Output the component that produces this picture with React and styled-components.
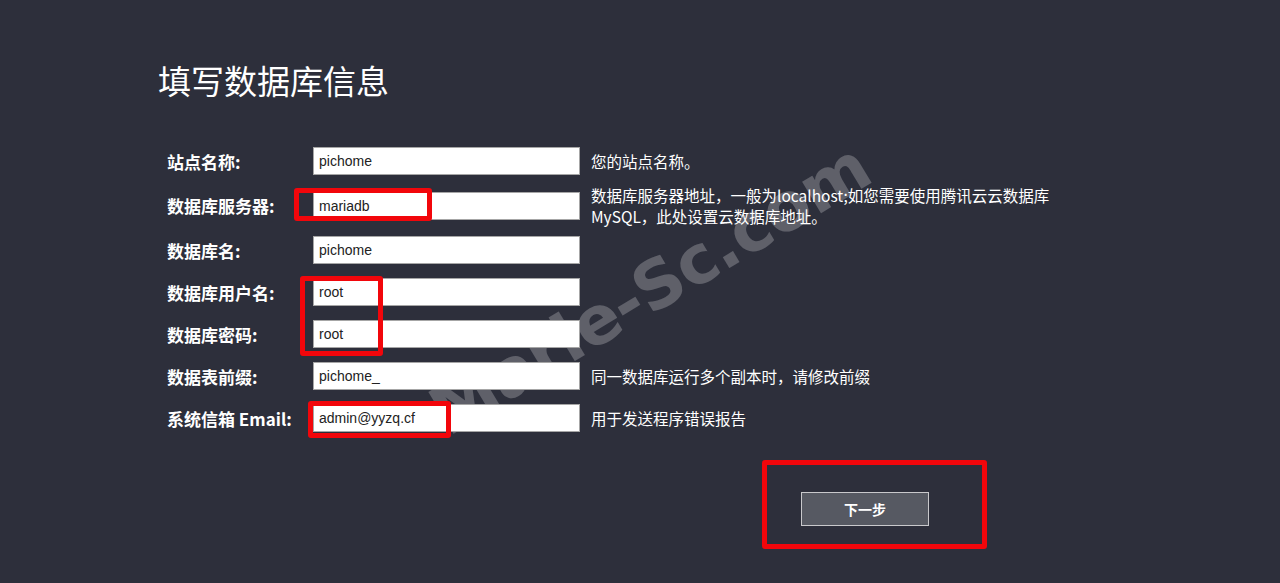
import React from "react";
import styled, { createGlobalStyle } from "styled-components";

const GlobalStyle = createGlobalStyle`
  html, body { margin: 0; padding: 0; }
  body {
    background: #2d2f3b;
    font-family: "Noto Sans CJK SC", "Noto Sans", sans-serif;
    color: #ffffff;
  }
`;

const Page = styled.div`
  position: relative;
  width: 1280px;
  height: 583px;
  overflow: hidden;
  background: #2d2f3b;
`;

const Watermark = styled.div`
  position: absolute;
  left: 650px;
  top: 289px;
  transform: translate(-50%, -50%) rotate(-31deg);
  font-family: "DejaVu Sans", "Liberation Sans", sans-serif;
  font-weight: 700;
  font-size: 67px;
  letter-spacing: -1px;
  color: rgba(255, 255, 255, 0.24);
  white-space: nowrap;
  z-index: 0;
  pointer-events: none;
`;

const Container = styled.div`
  position: relative;
  z-index: 1;
  width: 964px;
  margin: 0 auto;
  padding-top: 59px;
  box-sizing: border-box;
`;

const Title = styled.h1`
  margin: 0;
  font-size: 33px;
  line-height: 42px;
  font-weight: 400;
  color: #ffffff;
`;

const Form = styled.div`
  margin-top: 39px;
  display: flex;
  flex-direction: column;
`;

const FormRow = styled.div`
  display: grid;
  grid-template-columns: 135px 267px 1fr;
  column-gap: 11px;
  align-items: center;
  min-height: 42px;
  padding-left: 9px;
`;

const Label = styled.label`
  font-size: 17px;
  font-weight: 700;
  color: #ffffff;
  white-space: nowrap;
`;

const Input = styled.input`
  box-sizing: border-box;
  width: 267px;
  height: 28px;
  margin: 0;
  padding: 0 5px;
  border: 1px solid #a6a6a6;
  border-radius: 0;
  background: #ffffff;
  font-family: "Liberation Sans", Arial, sans-serif;
  font-size: 14px;
  color: #222222;
  outline: none;
`;

const Help = styled.div`
  font-size: 15.5px;
  line-height: 20.5px;
  padding: 3px 0;
  color: #ffffff;
  white-space: nowrap;
`;

const ButtonRow = styled.div`
  margin-top: 53px;
  padding-left: 643px;
`;

const NextButton = styled.button`
  box-sizing: border-box;
  width: 128px;
  height: 34px;
  border: 1px solid #c9c9cc;
  background: #565962;
  color: #ffffff;
  font-family: "Noto Sans CJK SC", sans-serif;
  font-size: 14px;
  font-weight: 700;
  cursor: pointer;
`;

const Marker = styled.div`
  position: absolute;
  z-index: 2;
  box-sizing: border-box;
  border: 5px solid #f2060b;
  border-radius: 3px;
  pointer-events: none;
`;

const rows = [
  { label: "站点名称:", value: "pichome", help: ["您的站点名称。"] },
  {
    label: "数据库服务器:",
    value: "mariadb",
    help: [
      "数据库服务器地址，一般为localhost;如您需要使用腾讯云云数据库",
      "MySQL，此处设置云数据库地址。",
    ],
  },
  { label: "数据库名:", value: "pichome", help: [] },
  { label: "数据库用户名:", value: "root", help: [] },
  { label: "数据库密码:", value: "root", help: [] },
  { label: "数据表前缀:", value: "pichome_", help: ["同一数据库运行多个副本时，请修改前缀"] },
  { label: "系统信箱 Email:", value: "admin@yyzq.cf", help: ["用于发送程序错误报告"] },
];

const markers = [
  { left: 294, top: 188, width: 138, height: 33 },
  { left: 300, top: 276, width: 83, height: 80 },
  { left: 308, top: 401, width: 143, height: 37 },
  { left: 762, top: 460, width: 225, height: 89 },
];

export default function App() {
  return (
    <>
      <GlobalStyle />
      <Page>
        <Watermark>Marle-Sc.com</Watermark>
        <Container>
          <Title>填写数据库信息</Title>
          <Form>
            {rows.map((r) => (
              <FormRow key={r.label}>
                <Label>{r.label}</Label>
                <Input defaultValue={r.value} />
                <Help>
                  {r.help.map((line, i) => (
                    <React.Fragment key={i}>
                      {i > 0 && <br />}
                      {line}
                    </React.Fragment>
                  ))}
                </Help>
              </FormRow>
            ))}
          </Form>
          <ButtonRow>
            <NextButton>下一步</NextButton>
          </ButtonRow>
        </Container>
        {markers.map((m, i) => (
          <Marker
            key={i}
            style={{ left: m.left, top: m.top, width: m.width, height: m.height }}
          />
        ))}
      </Page>
    </>
  );
}
